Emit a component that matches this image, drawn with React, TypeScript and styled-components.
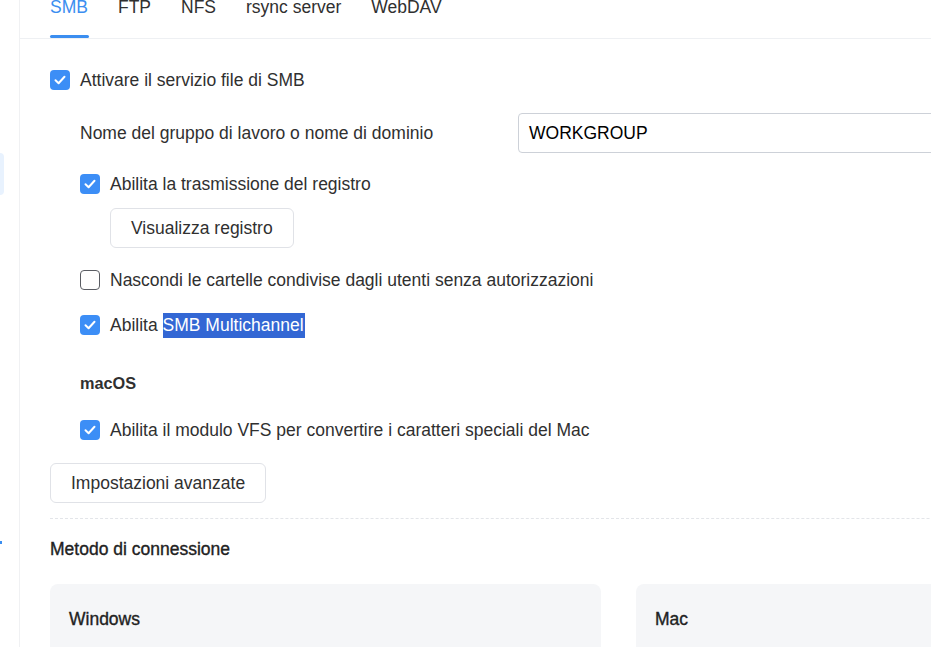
import React from "react";
import styled, { createGlobalStyle } from "styled-components";

const Global = createGlobalStyle`
  html, body { margin: 0; padding: 0; overflow: hidden; background: #fff; }
  body { font-family: "Liberation Sans", Arial, sans-serif; font-size: 17.5px; color: #303030; }
  * { box-sizing: border-box; }
`;

const Page = styled.div`
  display: flex;
  width: 1240px;
  height: 647px;
  overflow: hidden;
`;

const Sidebar = styled.aside`
  width: 20px;
  flex: none;
  border-right: 1px solid #f0f1f3;
  display: flex;
  flex-direction: column;
  padding-top: 153px;
`;

const SideItem = styled.div`
  width: 4px;
  height: 42px;
  background: #e8f2fe;
  border-radius: 0 5px 5px 0;
`;

const SideMark = styled.div`
  width: 2px;
  height: 3px;
  background: #3b8ef0;
  margin-top: 346px;
`;

const Main = styled.main`
  flex: 1;
  display: flex;
  flex-direction: column;
`;

const TabBar = styled.nav`
  display: flex;
  gap: 30px;
  padding-left: 30px;
  height: 39px;
  flex: none;
  border-bottom: 1px solid #eef0f3;
`;

const Tab = styled.div<{ $active?: boolean }>`
  position: relative;
  height: 38px;
  line-height: 14px;
  color: ${(p) => (p.$active ? "#3b8ef0" : "#303030")};
  &::after {
    content: "";
    display: ${(p) => (p.$active ? "block" : "none")};
    position: absolute;
    left: 0;
    right: -1px;
    bottom: 0;
    height: 3px;
    border-radius: 2px;
    background: #3b8ef0;
  }
`;

const Form = styled.section`
  display: flex;
  flex-direction: column;
  align-items: flex-start;
  padding: 0 30px;
`;

const CheckRow = styled.label<{ $indent?: boolean; $mt: number }>`
  display: flex;
  align-items: center;
  gap: 10px;
  height: 20px;
  line-height: 20px;
  margin-top: ${(p) => p.$mt}px;
  margin-left: ${(p) => (p.$indent ? 30 : 0)}px;
`;

const Box = styled.span<{ $checked?: boolean }>`
  width: 20px;
  height: 20px;
  flex: none;
  border-radius: 4px;
  display: flex;
  align-items: center;
  justify-content: center;
  background: ${(p) => (p.$checked ? "#3c8ef6" : "#fff")};
  border: ${(p) => (p.$checked ? "none" : "1.3px solid #5a5d63")};
`;

const Selected = styled.span`
  display: inline-block;
  background: #3367d4;
  color: #fff;
  line-height: 25px;
  padding-right: 1px;
`;

const FieldRow = styled.div`
  display: flex;
  align-items: center;
  margin-top: 23px;
  margin-left: 30px;
  width: 100%;
`;

const FieldLabel = styled.div`
  width: 438px;
  flex: none;
`;

const Input = styled.div`
  height: 40px;
  flex: 1;
  border: 1px solid #cdd1d8;
  border-radius: 4px;
  padding-left: 10px;
  display: flex;
  align-items: center;
  color: #000;
`;

const Button = styled.button<{ $indent?: boolean; $mt: number }>`
  height: 40px;
  padding: 0 20px;
  border: 1px solid #e0e2e7;
  border-radius: 6px;
  background: #fff;
  font: inherit;
  color: #303030;
  margin-top: ${(p) => p.$mt}px;
  margin-left: ${(p) => (p.$indent ? 60 : 0)}px;
`;

const SubTitle = styled.div`
  font-weight: 700;
  font-size: 16.3px;
  line-height: 20px;
  margin-top: 38px;
  margin-left: 30px;
`;

const Divider = styled.hr`
  width: 100%;
  border: none;
  border-top: 1px dashed #e3e5e9;
  margin: 15px 0 0;
`;

const SectionTitle = styled.div`
  line-height: 20px;
  margin-top: 20px;
  color: #222;
  -webkit-text-stroke: 0.35px #222;
`;

const Cards = styled.div`
  display: grid;
  grid-template-columns: 551px 551px;
  gap: 35px;
  margin-top: 25px;
`;

const Card = styled.div`
  background: #f5f6f8;
  border-radius: 8px;
  height: 80px;
  padding: 25px 19px;
`;

const CardTitle = styled.div`
  line-height: 20px;
  color: #222;
  -webkit-text-stroke: 0.35px #222;
`;

const Check = () => (
  <svg width="14" height="14" viewBox="0 0 14 14" fill="none">
    <path d="M2.5 7.3 L5.6 10.2 L11.5 3.8" stroke="#fff" strokeWidth="2" strokeLinecap="round" strokeLinejoin="round" />
  </svg>
);

const Checkbox = ({ checked, children, indent, mt }: { checked?: boolean; children: React.ReactNode; indent?: boolean; mt: number }) => (
  <CheckRow $indent={indent} $mt={mt}>
    <Box $checked={checked}>{checked && <Check />}</Box>
    <span>{children}</span>
  </CheckRow>
);

export default function App() {
  return (
    <>
      <Global />
      <Page>
        <Sidebar>
          <SideItem />
          <SideMark />
        </Sidebar>
        <Main>
          <TabBar>
            <Tab $active>SMB</Tab>
            <Tab>FTP</Tab>
            <Tab>NFS</Tab>
            <Tab>rsync server</Tab>
            <Tab>WebDAV</Tab>
          </TabBar>
          <Form>
            <Checkbox checked mt={31}>Attivare il servizio file di SMB</Checkbox>
            <FieldRow>
              <FieldLabel>Nome del gruppo di lavoro o nome di dominio</FieldLabel>
              <Input>WORKGROUP</Input>
            </FieldRow>
            <Checkbox checked indent mt={21}>Abilita la trasmissione del registro</Checkbox>
            <Button $indent $mt={14}>Visualizza registro</Button>
            <Checkbox indent mt={22}>Nascondi le cartelle condivise dagli utenti senza autorizzazioni</Checkbox>
            <Checkbox checked indent mt={25}>
              Abilita <Selected>SMB Multichannel</Selected>
            </Checkbox>
            <SubTitle>macOS</SubTitle>
            <Checkbox checked indent mt={27}>Abilita il modulo VFS per convertire i caratteri speciali del Mac</Checkbox>
            <Button $mt={23}>Impostazioni avanzate</Button>
            <Divider />
            <SectionTitle>Metodo di connessione</SectionTitle>
            <Cards>
              <Card>
                <CardTitle>Windows</CardTitle>
              </Card>
              <Card>
                <CardTitle>Mac</CardTitle>
              </Card>
            </Cards>
          </Form>
        </Main>
      </Page>
    </>
  );
}
